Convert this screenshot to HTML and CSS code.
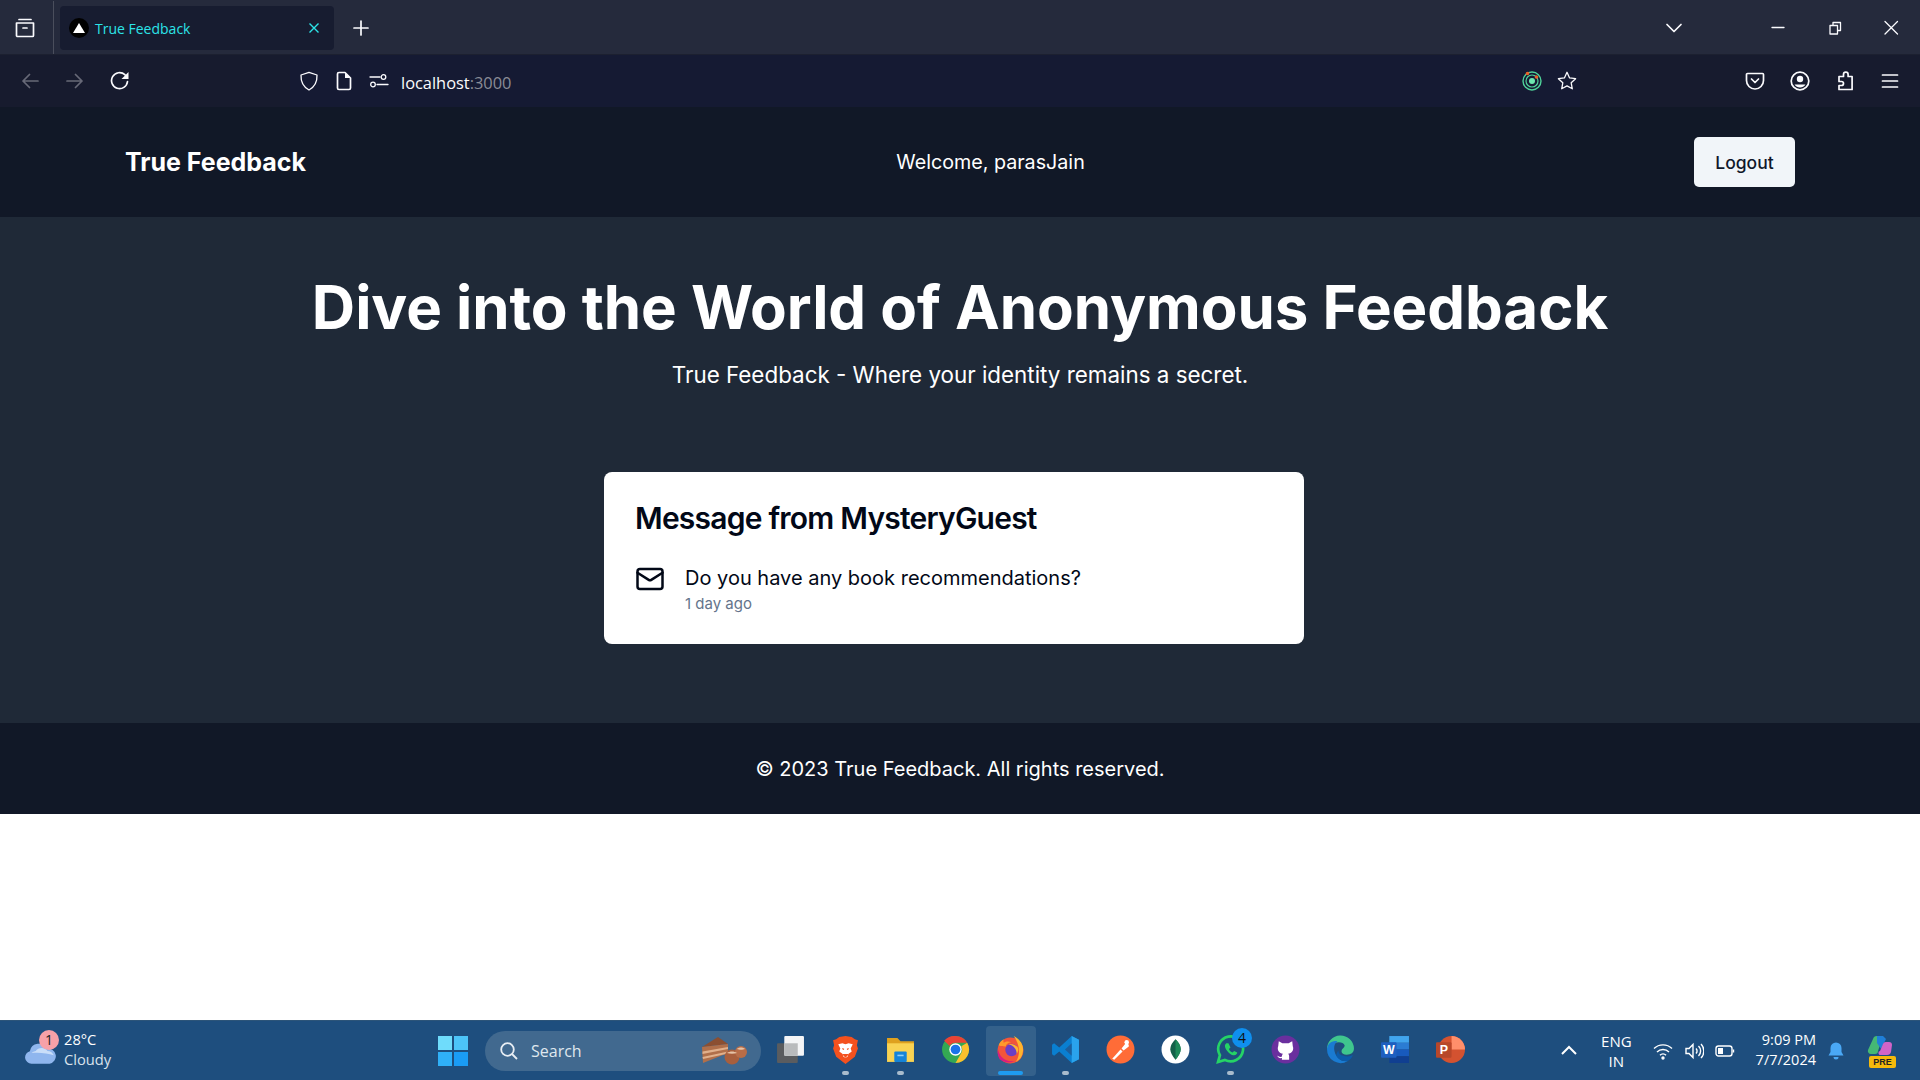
FILE: index.html
```html
<!DOCTYPE html>
<html lang="en">
<head>
    <meta charset="UTF-8">
    <title>True Feedback</title>
    <link rel="stylesheet" href="styles.css">
</head>
<body>
    <div class="tabbar">
        <div class="tab-side">
            <svg class="ico" viewBox="0 0 20 20"><path d="M4 1.5h12M1.5 5h17v12.500a1 1 0 0 1-1 1h-15a1 1 0 0 1-1-1zM8 10h4" class="ln"/></svg>
        </div>
        <div class="tab">
            <span class="favicon"><svg viewBox="0 0 10 10"><path d="M5 2.5l3 5H2z" fill="#fff"/></svg></span>
            <span class="tab-title">True Feedback</span>
            <svg class="tab-close" viewBox="0 0 12 12"><path d="M1.5 1.5l9 9M10.5 1.5l-9 9"/></svg>
        </div>
        <svg class="ico new-tab" viewBox="0 0 20 20"><path d="M10 3v14M3 10h14" class="ln"/></svg>
        <div class="grow"></div>
        <svg class="ico tab-list" viewBox="0 0 20 20"><path d="M3 6.5l7 7 7-7" class="ln"/></svg>
        <div class="win-btns">
            <svg class="ico" viewBox="0 0 20 20"><path d="M4 9.5h12" class="ln thin"/></svg>
            <svg class="ico" viewBox="0 0 20 20"><path d="M5 7.5h7.5V16H5zM8 7.5v-3h7.5v8h-3" class="ln thin"/></svg>
            <svg class="ico" viewBox="0 0 20 20"><path d="M4 3.500l12.500 12.500M16.500 3.500L4 16" class="ln thin"/></svg>
        </div>
    </div>

    <div class="toolbar">
        <div class="tool-left">
            <svg class="ico dim" viewBox="0 0 20 20"><path d="M18 10H3M9.500 3.500L3 10l6.500 6.500" class="ln"/></svg>
            <svg class="ico dim" viewBox="0 0 20 20"><path d="M2 10h15M10.500 3.500L17 10l-6.500 6.500" class="ln"/></svg>
            <svg class="ico" viewBox="0 0 20 20"><path d="M17.500 10.500a8 8 0 1 1-2.600-6.800L17 6" class="ln"/><path d="M18.500 1v7h-7z" fill="#fbfbfe"/></svg>
        </div>
        <div class="urlbar">
            <svg class="ico" viewBox="0 0 20 20"><path d="M10 1.300l8 2.700c.3 7-2 11.700-8 15-6-3.300-8.300-8-8-15z" class="ln thin"/></svg>
            <svg class="ico" viewBox="0 0 20 20"><path d="M3.500 3a1.500 1.500 0 0 1 1.500-1.500h6l5.500 5.500v10a1.500 1.500 0 0 1-1.500 1.500H5A1.500 1.500 0 0 1 3.500 17z" class="ln"/><path d="M11 1.500L16.500 7H11z" fill="#fbfbfe"/></svg>
            <svg class="ico" viewBox="0 0 20 20"><circle cx="14.500" cy="6" r="2.300" class="ln thin"/><circle cx="4" cy="13.500" r="2.300" class="ln thin"/><path d="M1 6h10M8 13.500h11" class="ln thin"/></svg>
            <span class="url"><span class="url-host">localhost</span>:3000</span>
            <div class="grow"></div>
            <svg class="ico" viewBox="0 0 20 20"><circle cx="10" cy="10" r="9" fill="none" stroke="#4fd29a" stroke-width="1.400"/><circle cx="10" cy="10" r="6" fill="none" stroke="#4fd29a" stroke-width="1.200"/><circle cx="10" cy="10" r="3" fill="#6ee7b0"/><circle cx="5.500" cy="2.500" r="1.800" fill="#e8622a"/><circle cx="14.500" cy="6" r="1.800" fill="#e8622a"/></svg>
            <svg class="ico" viewBox="0 0 20 20"><path d="M10 1.300l2.600 5.600 6 .8-4.400 4.100 1.100 6L10 14.900l-5.300 2.900 1.100-6L1.400 7.700l6-.8z" class="ln thin"/></svg>
        </div>
        <div class="tool-right">
            <svg class="ico" viewBox="0 0 20 20"><path d="M2.500 2.500h15a1 1 0 0 1 1 1v6a8.500 8.500 0 0 1-17 0v-6a1 1 0 0 1 1-1zM6.500 8l3.500 3.500L13.500 8" class="ln"/></svg>
            <svg class="ico" viewBox="0 0 20 20"><circle cx="10" cy="10" r="8.800" class="ln"/><circle cx="10" cy="8" r="3.200" fill="#fbfbfe"/><path d="M4.500 13.500h11a6.500 6.500 0 0 1-11 0z" fill="#fbfbfe"/></svg>
            <svg class="ico" viewBox="0 0 20 20"><path d="M8.500 5.500V3.500a2.300 2.300 0 0 1 4.600 0v2h4v13H4v-4h2.500a2 2 0 0 0 0-4H4V5.500z" class="ln"/></svg>
            <svg class="ico" viewBox="0 0 20 20"><path d="M2.500 4h15M2.500 10h15M2.500 16h15" class="ln"/></svg>
        </div>
    </div>

    <nav class="site-nav">
        <a class="brand" href="#">True Feedback</a>
        <span class="welcome">Welcome, parasJain</span>
        <button class="logout" type="button">Logout</button>
    </nav>

    <main class="hero">
        <h1>Dive into the World of Anonymous Feedback</h1>
        <p class="tagline">True Feedback - Where your identity remains a secret.</p>
        <div class="card">
            <h3>Message from MysteryGuest</h3>
            <div class="msg">
                <svg class="mail" viewBox="0 0 24 24"><rect x="2" y="4" width="20" height="16" rx="2"/><path d="M22 7l-8.970 5.700a1.940 1.940 0 0 1-2.060 0L2 7"/></svg>
                <div>
                    <p class="msg-text">Do you have any book recommendations?</p>
                    <p class="msg-time">1 day ago</p>
                </div>
            </div>
        </div>
    </main>

    <footer class="site-footer">© 2023 True Feedback. All rights reserved.</footer>

    <div class="blank"></div>

    <div class="taskbar">
        <div class="weather">
            <svg class="cloud" viewBox="0 0 30 24"><path d="M7 23a6 6 0 0 1-1.500-11.800A8.500 8.500 0 0 1 21.500 9 7 7 0 0 1 24 23z" fill="#8fb6ee"/><path d="M7 13a6 6 0 0 1 4-2c2-3 8-4 11 0 3 0 5 2 6 4-6-2-15-3-21-2z" fill="#c9def9"/></svg>
            <span class="weather-badge">1</span>
            <div class="weather-text"><span>28°C</span><span class="cloudy">Cloudy</span></div>
        </div>
        <div class="task-center">
            <svg class="app-win" viewBox="0 0 30 30"><rect x="0" y="0" width="14" height="14" fill="#6fdcfb"/><rect x="16" y="0" width="14" height="14" fill="#4cc4f8"/><rect x="0" y="16" width="14" height="14" fill="#2fb0f8"/><rect x="16" y="16" width="14" height="14" fill="#1a9cf5"/></svg>
            <div class="search">
                <svg class="search-ico" viewBox="0 0 20 20"><circle cx="8.500" cy="8.500" r="6.300"/><path d="M13 13l5 5"/></svg>
                <span>Search</span>
                <svg class="cake" viewBox="0 0 46 30"><path d="M1 11L17 1l10 7z" fill="#8b4f31"/><path d="M1 11l26-3v9L2 27z" fill="#b06f4a"/><path d="M1.500 15.500L27 11v2L1.500 18zM1.500 21L27 15.500v2L2 23z" fill="#e0b08c"/><circle cx="31" cy="21" r="7.500" fill="#a85f3d"/><circle cx="40" cy="16" r="6" fill="#b86d48"/><path d="M26 17c3-2 7-2 10 0-3 1-7 1-10 0zM36 13c2-2 6-2 8 0-2 1-6 1-8 0z" fill="#e6c3a6"/></svg>
            </div>
            <div class="apps">
                <span class="app"><svg viewBox="0 0 28 28"><rect x="1" y="8" width="20" height="19" rx="1" fill="#5a5c5f"/><rect x="8" y="1" width="19" height="19" rx="1" fill="#f4f5f7"/><rect x="8" y="8" width="13" height="12" fill="#b9bbbd"/></svg></span>
                <span class="app"><svg viewBox="0 0 28 28"><path d="M14 1l6 1 3 2 3 1-1 5 1 3-3 8-9 7-9-7-3-8 1-3-1-5 3-1 3-2z" fill="#f4511e"/><path d="M7 9l4-1 3 1 3-1 4 1-2 4 1 3-3 2-1 3-2 1-2-1-1-3-3-2 1-3z" fill="#fff"/><path d="M11 13l1.500 1M17 13l-1.500 1M12 19h4l-2 2z" stroke="#f4511e" stroke-width="1.200" fill="#f4511e"/></svg><i class="dot"></i></span>
                <span class="app"><svg viewBox="0 0 28 28"><path d="M1 3h10l3 3h13v6H1z" fill="#dfa11e"/><path d="M1 8h26v18H1z" fill="#f9d353"/><rect x="8" y="16" width="12" height="10" rx="1" fill="#1584d8"/><rect x="11" y="19" width="6" height="1.500" fill="#8fd0f7"/></svg><i class="dot"></i></span>
                <span class="app"><svg viewBox="0 0 28 28"><circle cx="14" cy="14" r="13" fill="#34a853"/><path d="M14 1a13 13 0 0 1 11.300 6.500H14a6.500 6.500 0 0 0-5.600 3.200L3 5.500A13 13 0 0 1 14 1z" fill="#ea4335"/><path d="M25.300 7.500A13 13 0 0 1 14 27l5.600-9.700a6.500 6.500 0 0 0 0-6.500z" fill="#fbc02d"/><circle cx="14" cy="14" r="6" fill="#fff"/><circle cx="14" cy="14" r="4.700" fill="#1a73e8"/></svg></span>
                <span class="app active"><svg viewBox="0 0 28 28"><circle cx="14" cy="15" r="12.500" fill="#f2553a"/><path d="M17 1c6 3 10 8 9 15a12.500 12.500 0 0 1-7 10c5-7 4-17-2-25z" fill="#ffb52e"/><path d="M2 14c1 7 8 13 16 11a12.500 12.500 0 0 1-14.500-1.500A12.500 12.500 0 0 1 2 14z" fill="#d81e7f"/><path d="M2.500 10c1-3 3-5 5-6-.5 1.500-.5 2.500 0 3.500 2-1.500 5-1.500 7-.5-3 .5-5 2-5 4-3 0-6 0-7-1z" fill="#ff9a2b"/><circle cx="15" cy="14.500" r="6" fill="#6a3fc6"/><path d="M12 9c3-1 7 0 9 3 1 2 .5 4-1 6 0-4-3-8-8-9z" fill="#ffb52e"/></svg><i class="bar"></i></span>
                <span class="app"><svg viewBox="0 0 28 28"><path d="M20 1l7 3.500v19L20 27 8 16l-5 4-2-1.500V9.500L3 8l5 4z" fill="#0a7fd0"/><path d="M20 1l7 3.500v19L20 27z" fill="#2aa3ec"/><path d="M20 8l-6.500 6 6.500 6z" fill="#1d5f9c"/></svg><i class="dot"></i></span>
                <span class="app"><svg viewBox="0 0 28 28"><circle cx="14" cy="14" r="13.500" fill="#ff6c37"/><path d="M6 23l8-9 2 2-8 8zM15 13l4-5a2.500 2.500 0 0 1 3 3l-5 4z" fill="#fff"/><circle cx="20" cy="7" r="2.200" fill="#fff"/></svg></span>
                <span class="app"><svg viewBox="0 0 28 28"><circle cx="14" cy="14" r="13.500" fill="#fff"/><path d="M14 4c4 4 5 7 5 10s-2 6-5 10c-3-4-5-7-5-10s1-6 5-10z" fill="#136149"/><path d="M14 4c4 4 5 7 5 10s-2 6-5 10z" fill="#1c8a58"/></svg></span>
                <span class="app"><svg viewBox="0 0 28 28"><path d="M2 26l1.800-6.500A12 12 0 1 1 8.500 24z" fill="none" stroke="#25d366" stroke-width="2.600"/><path d="M10 8c-1.500 1-2 3-.5 5.500S14 19 16.500 19.500c2.500.5 4-1 4-2.500l-3-1.500-1.500 1.500c-1.500-.5-3-2-3.500-3.500l1.500-1.500L12 8z" fill="#25d366"/></svg><span class="wa-badge">4</span><i class="dot"></i></span>
                <span class="app"><svg viewBox="0 0 28 28"><circle cx="14" cy="14" r="13.500" fill="#6a2f9e"/><path d="M7.500 6l3.500 2h6l3.500-2 .5 4.500c1.500 4-1 7-4.500 7.500.8.700 1 1.500 1 2.500V24h-7v-1.800c-2.500.5-3.500-.5-4.500-2.200 1.500.5 2 1.500 4.500 1 0-1 .2-2 1-3-3.500-.5-6-3.500-4.500-7.500z" fill="#fff"/></svg></span>
                <span class="app"><svg viewBox="0 0 28 28"><path d="M1 14a13 13 0 0 1 26-1c0 4-3 6-7 6-3 0-5-1-5-3 0-3 3-3 3-6-1-3-6-4-10-2-4 2-6 4-7 6z" fill="#3fc68e"/><path d="M1 14c0-5 4-9 10-8-4 3-4 9-1 14 2 3 6 6 11 5a13 13 0 0 1-20-11z" fill="#1a7bd1"/><path d="M10 20c2 4 7 6 11 5 2-1 4-3 5-6-3 2-6 2-9 1-3 0-5-2-5-5-1 1-2 3-2 5z" fill="#0c5ba8"/></svg></span>
                <span class="app"><svg viewBox="0 0 28 28"><rect x="8" y="1" width="19" height="6.500" fill="#41a5ee"/><rect x="8" y="7.500" width="19" height="6.500" fill="#2b7cd3"/><rect x="8" y="14" width="19" height="6.500" fill="#185abd"/><rect x="8" y="20.500" width="19" height="6.500" fill="#103f91"/><rect x="0" y="7" width="15" height="15" rx="1" fill="#1e5fc0"/><text x="7.500" y="18.500" class="word">W</text></svg></span>
                <span class="app"><svg viewBox="0 0 28 28"><circle cx="15" cy="14" r="13" fill="#d35230"/><path d="M15 1a13 13 0 0 1 13 13H15z" fill="#ff8f6b"/><rect x="0" y="7" width="15" height="15" rx="1" fill="#b7472a"/><text x="7.500" y="18.500" class="word">P</text></svg></span>
            </div>
        </div>
        <div class="grow"></div>
        <div class="tray">
            <svg class="tray-ico chev" viewBox="0 0 20 20"><path d="M3 13l7-7 7 7"/></svg>
            <div class="lang"><span>ENG</span><span>IN</span></div>
            <svg class="tray-ico" viewBox="0 0 20 20"><path d="M1 7.500a13 13 0 0 1 18 0M4 11a8.500 8.500 0 0 1 12 0M7 14.200a4 4 0 0 1 6 0"/><circle cx="10" cy="17" r="1" fill="#fff"/></svg>
            <svg class="tray-ico" viewBox="0 0 20 20"><path d="M2 7.500v5h3l4 4v-13l-4 4zM12 7.500a3.500 3.500 0 0 1 0 5M14.500 5a7 7 0 0 1 0 10M17 3a10 10 0 0 1 0 14"/></svg>
            <svg class="tray-ico" viewBox="0 0 20 20"><rect x="1" y="5" width="16" height="10" rx="2.500"/><rect x="3" y="7" width="5" height="6" fill="#fff" stroke="none"/><path d="M18.500 8.500v3"/></svg>
            <div class="clock"><span>9:09 PM</span><span>7/7/2024</span></div>
            <svg class="bell" viewBox="0 0 20 20"><path d="M10 1.500a5.500 5.500 0 0 1 5.500 5.500v4l2 3.500h-15l2-3.500V7A5.500 5.500 0 0 1 10 1.500z" fill="#4aa8f5"/><path d="M7.500 16h5a2.500 2.500 0 0 1-5 0z" fill="#4aa8f5"/></svg>
            <span class="copilot">
                <svg viewBox="0 0 28 28"><path d="M3 16L8 5a4 4 0 0 1 4-3h6l-5 15a3 3 0 0 1-3 3H6a3 3 0 0 1-3-4z" fill="#45b874"/><path d="M12 2h6l3 3-5 10-4-6z" fill="#1f7fd8"/><path d="M15 17l3-7a3 3 0 0 1 3-2h3a3 3 0 0 1 3 3l-1 7a4 4 0 0 1-4 3h-6a2 2 0 0 1-1-4z" fill="#d264c8"/></svg>
                <b class="pre">PRE</b>
            </span>
        </div>
    </div>
</body>
</html>
```

FILE: styles.css
```css
* {
    box-sizing: border-box;
}

html, body, h1, h3, p {
    margin: 0;
    padding: 0;
}

body {
    width: 1920px;
    height: 1080px;
    overflow: hidden;
    display: flex;
    flex-direction: column;
    font-family: Inter, "Liberation Sans", sans-serif;
    background-color: #fff;
}

.grow {
    flex: 1;
}

.ico {
    width: 20px;
    height: 20px;
    flex: none;
}

.ln {
    fill: none;
    stroke: #fbfbfe;
    stroke-width: 1.7;
    stroke-linecap: round;
    stroke-linejoin: round;
}

.ln.thin {
    stroke-width: 1.3;
}

.dim {
    opacity: .35;
}

/* browser tab strip */
.tabbar {
    height: 55px;
    padding-top: 1px;
    display: flex;
    align-items: center;
    background-color: #252a3c;
    border-bottom: 1px solid #1c2030;
}

.tab-side {
    width: 54px;
    height: 100%;
    padding-right: 3px;
    display: flex;
    align-items: center;
    justify-content: center;
    border-right: 1px solid #4a4e5c;
}

.tab {
    width: 274px;
    height: 44px;
    margin-left: 6px;
    padding: 0 14px 0 9px;
    display: flex;
    align-items: center;
    gap: 6px;
    border-radius: 4px;
    background-color: #171c30;
}

.favicon {
    width: 20px;
    height: 20px;
    display: flex;
    border-radius: 50%;
    background-color: #000;
}

.tab-title {
    flex: 1;
    padding-top: 1px;
    font-family: "Open Sans", sans-serif;
    font-size: 14px;
    color: #2ce4e8;
}

.tab-close {
    width: 12px;
    height: 12px;
    fill: none;
    stroke: #2ce4e8;
    stroke-width: 1.4;
}

.new-tab {
    margin-left: 17px;
}

.tab-list {
    margin-right: 84px;
}

.win-btns {
    display: flex;
    gap: 36.5px;
    margin-right: 19px;
}

/* browser toolbar */
.toolbar {
    height: 52px;
    display: flex;
    align-items: center;
    background-color: #171b2e;
}

.tool-left {
    width: 290px;
    padding-left: 20px;
    display: flex;
    gap: 25px;
}

.urlbar {
    width: 1290px;
    height: 52px;
    padding: 0 3px 0 9px;
    display: flex;
    align-items: center;
    gap: 15px;
    background-color: #151a33;
}

.url {
    margin-left: -3px;
    padding-top: 2px;
    font-family: "Open Sans", sans-serif;
    font-size: 16.4px;
    color: #8a8c96;
}

.url-host {
    color: #fbfbfe;
}

.tool-right {
    flex: 1;
    padding-right: 20px;
    display: flex;
    justify-content: flex-end;
    gap: 25px;
}

/* site */
.site-nav {
    height: 110px;
    padding: 0 125px;
    display: flex;
    align-items: center;
    justify-content: space-between;
    color: #fff;
    background-color: #111827;
}

.brand {
    font-size: 25px;
    font-weight: 700;
    color: #fff;
    text-decoration: none;
}

.welcome {
    margin-right: 19px;
    font-size: 19.7px;
}

.logout {
    width: 101px;
    height: 50px;
    border: none;
    border-radius: 5px;
    font-family: inherit;
    font-size: 17.5px;
    font-weight: 500;
    color: #0f172a;
    background-color: #f1f5f9;
}

.hero {
    height: 506px;
    padding-top: 53px;
    display: flex;
    flex-direction: column;
    align-items: center;
    color: #fff;
    background-color: #1f2937;
}

.hero h1 {
    font-size: 60px;
    line-height: 1.25;
    font-weight: 700;
    letter-spacing: -.06px;
}

.tagline {
    margin-top: 14px;
    font-size: 22.4px;
    line-height: 1.4;
}

.card {
    width: 700px;
    height: 172px;
    margin: 82px 12px 0 0;
    padding: 28px 31px;
    border-radius: 8px;
    color: #020817;
    background-color: #fff;
}

.card h3 {
    font-size: 30px;
    line-height: 36px;
    font-weight: 600;
    letter-spacing: -.78px;
}

.msg {
    display: flex;
    gap: 20px;
    margin-top: 28px;
}

.mail {
    width: 30px;
    height: 30px;
    flex: none;
    fill: none;
    stroke: #020817;
    stroke-width: 2;
    stroke-linecap: round;
    stroke-linejoin: round;
}

.msg-text {
    font-size: 20px;
    line-height: 28px;
}

.msg-time {
    font-size: 15px;
    line-height: 24px;
    color: #64748b;
}

.site-footer {
    height: 91px;
    display: flex;
    align-items: center;
    justify-content: center;
    font-size: 20px;
    color: #fff;
    background-color: #111827;
}

.blank {
    flex: 1;
    background-color: #fff;
}

/* windows taskbar */
.taskbar {
    height: 60px;
    display: flex;
    align-items: center;
    border-top: 1px solid #2c5479;
    color: #fff;
    background-color: #1e4e7e;
}

.weather {
    position: relative;
    width: 438px;
    padding-left: 24px;
    display: flex;
    align-items: center;
    gap: 8px;
}

.cloud {
    width: 32px;
    height: 26px;
    margin-top: 2px;
}

.weather-badge {
    position: absolute;
    left: 39px;
    top: -2px;
    width: 20px;
    height: 20px;
    border-radius: 50%;
    text-align: center;
    font: 14px/20px "Open Sans", sans-serif;
    color: #222;
    background-color: #f7a1a8;
}

.weather-text {
    display: flex;
    flex-direction: column;
    margin-top: -3px;
    font: 14.7px/20px "Open Sans", sans-serif;
}

.cloudy {
    color: #d8e2ec;
}

.task-center {
    display: flex;
    align-items: center;
}

.app-win {
    width: 30px;
    height: 30px;
}

.search {
    width: 276px;
    height: 40px;
    margin-left: 17px;
    padding: 0 14px;
    display: flex;
    align-items: center;
    gap: 12px;
    border-radius: 20px;
    font: 16px "Open Sans", sans-serif;
    color: #dfe7ee;
    background-color: #41698f;
}

.search span {
    flex: 1;
}

.search-ico {
    width: 20px;
    height: 20px;
    fill: none;
    stroke: #e8eef4;
    stroke-width: 1.8;
}

.cake {
    width: 46px;
    height: 30px;
}

.apps {
    margin-left: 4.5px;
    display: flex;
    gap: 5px;
}

.app {
    position: relative;
    width: 50px;
    height: 50px;
    display: flex;
    align-items: center;
    justify-content: center;
    border-radius: 4px;
}

.app svg {
    width: 29px;
    height: 29px;
    margin-top: -2px;
}

.app.active {
    background-color: #34618b;
}

.dot, .bar {
    position: absolute;
    bottom: 1px;
    height: 4px;
    border-radius: 2px;
}

.dot {
    left: 21.5px;
    width: 7px;
    background-color: #a9bccd;
}

.bar {
    left: 12.5px;
    width: 25px;
    background-color: #1e9bf0;
}

.word {
    font: 700 12px "Liberation Sans", sans-serif;
    text-anchor: middle;
    fill: #fff;
}

.wa-badge {
    position: absolute;
    right: 3.5px;
    top: 2px;
    width: 20px;
    height: 20px;
    border-radius: 50%;
    text-align: center;
    font: 14px/20px "Open Sans", sans-serif;
    color: #111;
    background-color: #0f8fef;
}

.tray {
    padding-right: 24px;
    display: flex;
    align-items: center;
    font: 14.5px/20px "Open Sans", sans-serif;
}

.tray-ico {
    width: 20px;
    height: 20px;
    margin-left: 11px;
    fill: none;
    stroke: #fff;
    stroke-width: 1.4;
}

.chev {
    margin-right: 22px;
    stroke-width: 2;
}

.lang {
    display: flex;
    flex-direction: column;
    align-items: center;
    margin-right: 10px;
    font-size: 15px;
}

.clock {
    display: flex;
    flex-direction: column;
    align-items: flex-end;
    margin: -2px 0 0 21px;
}

.bell {
    width: 20px;
    height: 20px;
    margin-left: 10px;
}

.copilot {
    position: relative;
    width: 32px;
    height: 34px;
    margin-left: 18px;
}

.copilot svg {
    width: 30px;
    height: 28px;
}

.pre {
    position: absolute;
    left: 5px;
    bottom: 0;
    width: 27px;
    height: 12px;
    border-radius: 2px;
    text-align: center;
    font: 700 9px/12px "Liberation Sans", sans-serif;
    color: #222;
    background-color: #f5b90c;
}
```
